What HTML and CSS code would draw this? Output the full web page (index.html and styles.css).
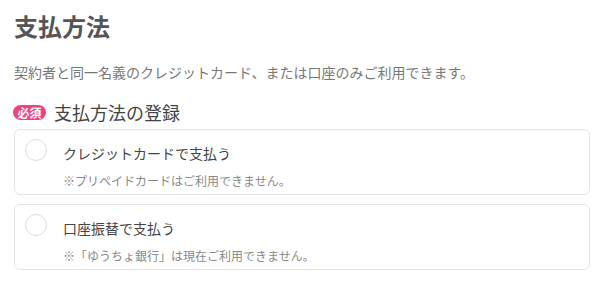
FILE: index.html
```html
<!DOCTYPE html>
<html lang="ja">
<head>
<meta charset="utf-8">
<link rel="stylesheet" href="styles.css">
</head>
<body>
<main class="page">
  <h1 class="title">支払方法</h1>
  <p class="desc">契約者と同一名義のクレジットカード、または口座のみご利用できます。</p>
  <div class="section-head">
    <span class="badge">必須</span>
    <h2 class="section-title">支払方法の登録</h2>
  </div>
  <div class="options">
    <label class="card">
      <span class="radio"></span>
      <span class="card-text">
        <span class="card-title">クレジットカードで支払う</span>
        <span class="card-note">※プリペイドカードはご利用できません。</span>
      </span>
    </label>
    <label class="card">
      <span class="radio"></span>
      <span class="card-text">
        <span class="card-title">口座振替で支払う</span>
        <span class="card-note">※「ゆうちょ銀行」は現在ご利用できません。</span>
      </span>
    </label>
  </div>
</main>
</body>
</html>
```

FILE: styles.css
```css
* { box-sizing: border-box; }
html, body { margin: 0; padding: 0; background: #fff; }
body {
  font-family: "Noto Sans CJK JP", "Noto Sans", sans-serif;
  color: #555;
}
.page { padding: 8px 13px 0 14px; }
.title {
  margin: 0;
  font-size: 24px;
  line-height: 36px;
  font-weight: 700;
  color: #555;
}
.desc {
  margin: 18px 0 0;
  font-size: 14px;
  line-height: 21px;
  color: #777;
}
.section-head {
  display: flex;
  align-items: center;
  gap: 8px;
  margin-top: 16px;
  height: 27px;
}
.badge {
  display: inline-flex;
  align-items: center;
  justify-content: center;
  width: 33px;
  height: 15px;
  margin-left: -1px;
  border-radius: 8px;
  background: #f0417c;
  color: #fff;
  font-size: 12px;
  font-weight: 700;
  line-height: 1;
}
.section-title {
  margin: 0;
  font-size: 18px;
  line-height: 27px;
  font-weight: 400;
  color: #444;
}
.options {
  display: flex;
  flex-direction: column;
  gap: 9px;
  margin-top: 3px;
}
.card {
  display: flex;
  align-items: flex-start;
  gap: 16px;
  padding: 9px 16px 4px 10px;
  border: 1px solid #e3e3e3;
  border-radius: 6px;
  background: #fff;
}
.radio {
  flex: none;
  width: 22px;
  height: 22px;
  border: 1px solid #dedede;
  border-radius: 50%;
  background: #fff;
}
.card-text {
  display: flex;
  flex-direction: column;
  padding-top: 4px;
}
.card-title {
  font-size: 14px;
  line-height: 21px;
  color: #444;
}
.card-note {
  margin-top: 8px;
  font-size: 12px;
  line-height: 18px;
  color: #888;
}
```
